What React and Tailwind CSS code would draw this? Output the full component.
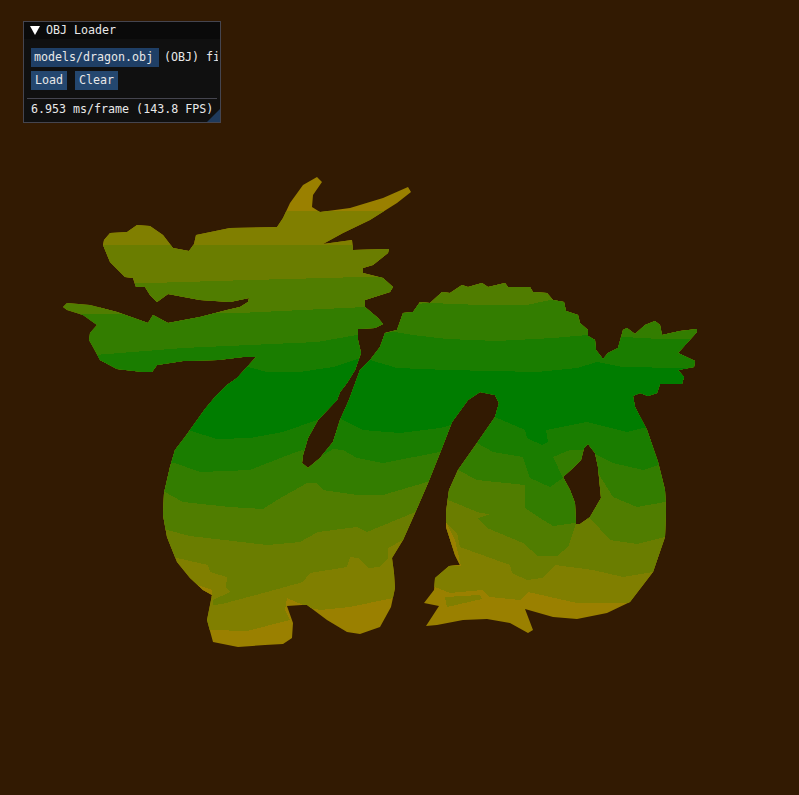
import React from 'react';

// silhouette of the model, traced clockwise from the snout
const OUTLINE = `104,240 110,233 127,232 137,225 150,226 163,235 173,248 189,251 194,244 196,235 230,228 277,227 283,218 290,203 303,185 317,177 322,182 313,195 312,207 320,212 350,208 383,198 408,187 411,192 397,203 370,220 343,233 323,244 352,240 353,250 389,249 388,253 373,265 363,268 363,273 383,278 393,287 390,292 365,300 365,307 378,318 383,324 375,328 358,329 358,340 361,353 355,370 347,383 340,392 337,400 318,420 308,438 303,455 302,463 308,468 320,458 333,442 340,420 349,400 360,370 370,360 380,347 385,333 397,330 403,313 413,312 420,302 430,303 442,292 450,293 462,285 468,287 482,283 488,287 505,283 508,287 530,287 533,292 547,293 553,300 564,302 566,311 578,315 580,323 588,330 588,336 595,340 596,350 603,359 608,353 618,348 623,330 627,328 635,334 645,325 655,321 660,325 662,335 680,331 697,329 697,332 678,353 695,361 694,367 678,370 684,377 682,384 660,384 657,393 648,396 640,393 633,396 635,407 647,430 658,462 665,490 666,510 665,537 653,572 630,602 607,613 577,619 553,617 525,609 533,630 528,633 510,623 487,619 463,620 437,625 426,626 439,606 424,603 434,590 435,578 449,566 460,565 455,555 446,527 446,512 449,490 458,470 477,443 495,417 499,403 495,395 480,392 468,400 452,422 440,453 428,483 415,513 403,540 392,558 394,573 395,588 391,607 380,627 360,634 347,632 327,620 307,605 302,605 287,606 293,623 292,638 283,644 265,645 238,647 213,642 207,620 212,595 203,590 190,578 177,562 167,537 163,515 164,493 170,467 175,450 185,437 195,423 205,409 215,397 227,385 237,378 256,357 243,357 218,360 183,361 157,365 152,372 143,372 117,369 100,360 93,347 89,340 90,333 97,325 83,315 67,310 63,307 67,303 90,305 117,312 148,323 153,315 168,323 200,317 227,310 240,307 248,302 249,298 230,302 200,300 168,294 157,302 150,295 145,287 136,287 133,278 125,277 110,262 103,245`;
const HOLE = `588,444 595,453 598,467 601,498 590,517 580,524 576,524 575,503 570,490 563,477 573,468 581,460 584,448`;

// nested colour bands, each one painted over the one before
const BANDS = [
  {
    fill: '#807f00',
    points: `0,211 800,211 800,603 577,603 528,592 520,600 490,597 482,590 450,593 435,587 420,587 393,598 350,607 320,610 307,607 303,605 287,598 285,610 290,620 247,631 210,630 100,630 100,211`,
  },
  {
    fill: '#6a7d00',
    points: `100,245 800,245 800,572 653,572 623,577 593,570 555,565 542,578 527,580 512,573 510,565 460,547 457,533 446,523 430,530 403,540 388,548 388,558 380,567 368,568 358,558 350,557 347,567 310,573 303,582 267,592 222,604 213,605 213,600 230,592 226,588 227,577 210,572 208,565 177,558 100,555`,
  },
  {
    fill: '#507d00',
    points: `0,283 150,283 250,280 362,277 800,277 800,537 665,537 637,544 610,540 590,518 576,524 568,547 557,556 538,556 523,543 487,528 478,518 490,514 480,513 448,500 430,505 413,513 367,532 357,527 318,532 300,542 267,545 190,536 167,530 100,525`,
  },
  {
    fill: '#337d00',
    points: `0,313 117,314 240,313 365,307 430,303 480,305 527,305 550,300 800,300 800,505 665,502 637,507 613,497 598,473 590,490 580,520 575,523 553,526 540,518 525,508 525,485 477,480 458,470 440,478 427,482 383,495 357,495 323,490 317,483 307,483 277,500 263,509 230,507 183,502 165,492 100,490`,
  },
  {
    fill: '#1a7d00',
    points: `0,355 95,355 183,348 317,342 357,335 395,332 413,335 447,339 497,341 553,338 588,335 660,339 800,339 800,465 658,465 643,470 613,463 597,455 583,450 570,450 553,457 563,478 550,487 530,478 523,457 493,452 477,443 460,445 440,452 383,463 357,458 343,450 333,449 320,457 310,455 302,450 283,457 250,470 200,472 175,463 100,455`,
  },
  {
    fill: '#007d00',
    points: `160,380 240,365 248,367 267,372 300,372 333,367 357,359 370,360 397,368 447,370 537,372 577,368 597,362 623,367 680,368 800,368 800,428 643,428 627,432 587,422 546,430 548,442 542,445 527,438 525,430 495,417 470,420 440,428 400,433 363,430 343,420 330,415 317,420 283,432 250,438 217,439 188,430 100,425`,
  },
];

// bits that don't fit the nesting
const PATCHES = [
  { fill: '#9a8000', points: '440,520 446,522 455,540 461,566 444,566' },
  { fill: '#9a8000', points: '198,585 212,590 212,597 198,597' },
  { fill: '#807f00', points: '445,597 480,595 482,599 447,607' },
];

function Dragon() {
  return (
    <svg className="absolute top-0 left-0" width="799" height="795" viewBox="0 0 799 795" shapeRendering="crispEdges">
      <defs>
        <clipPath id="silhouette">
          <path clipRule="evenodd" d={`M${OUTLINE}Z M${HOLE}Z`} />
        </clipPath>
      </defs>
      <g clipPath="url(#silhouette)">
        <rect width="799" height="795" fill="#9a8000" />
        {BANDS.map((band) => (
          <polygon key={band.fill} points={band.points} fill={band.fill} />
        ))}
        {PATCHES.map((patch) => (
          <polygon key={patch.points} points={patch.points} fill={patch.fill} />
        ))}
      </g>
    </svg>
  );
}

function LoaderPanel() {
  return (
    <div className="absolute left-[23px] top-[21px] w-[198px] h-[102px] border border-[#45454f] bg-[#101010] text-[#e8e8e8] text-[11.65px] leading-[13px] font-['DejaVu_Sans_Mono',monospace] overflow-hidden">
      {/* Title bar */}
      <div className="h-[17px] bg-[#0a0a0a] flex items-center pl-[6px]">
        <svg width="10" height="9" viewBox="0 0 10 9">
          <polygon points="0,0 10,0 5,9" fill="#ffffff" />
        </svg>
        <span className="ml-[6px]">OBJ Loader</span>
      </div>

      {/* File row */}
      <div className="flex items-center mt-[9px] ml-[7px] whitespace-nowrap">
        <div className="h-[19px] w-[128px] bg-[#1f3f66] flex items-center pl-[3px]">models/dragon.obj</div>
        <div className="ml-[5px] w-[54px] overflow-hidden">(OBJ) file</div>
      </div>

      {/* Buttons */}
      <div className="flex gap-[8px] mt-[4px] ml-[7px]">
        <div className="h-[19px] w-[36px] bg-[#24476f] flex items-center justify-center">Load</div>
        <div className="h-[19px] w-[43px] bg-[#24476f] flex items-center justify-center">Clear</div>
      </div>

      <div className="h-px bg-[#45454f] mt-[8px] mx-[3px]" />
      <div className="mt-[4px] ml-[7px] whitespace-nowrap">6.953 ms/frame (143.8 FPS)</div>

      {/* Resize grip */}
      <svg className="absolute right-0 bottom-0" width="13" height="13" viewBox="0 0 13 13">
        <polygon points="13,0 13,13 0,13" fill="#1f3a5c" />
      </svg>
    </div>
  );
}

export default function App() {
  return (
    <div className="relative w-full h-[795px] bg-[#321a02] overflow-hidden">
      <Dragon />
      <LoaderPanel />
    </div>
  );
}
